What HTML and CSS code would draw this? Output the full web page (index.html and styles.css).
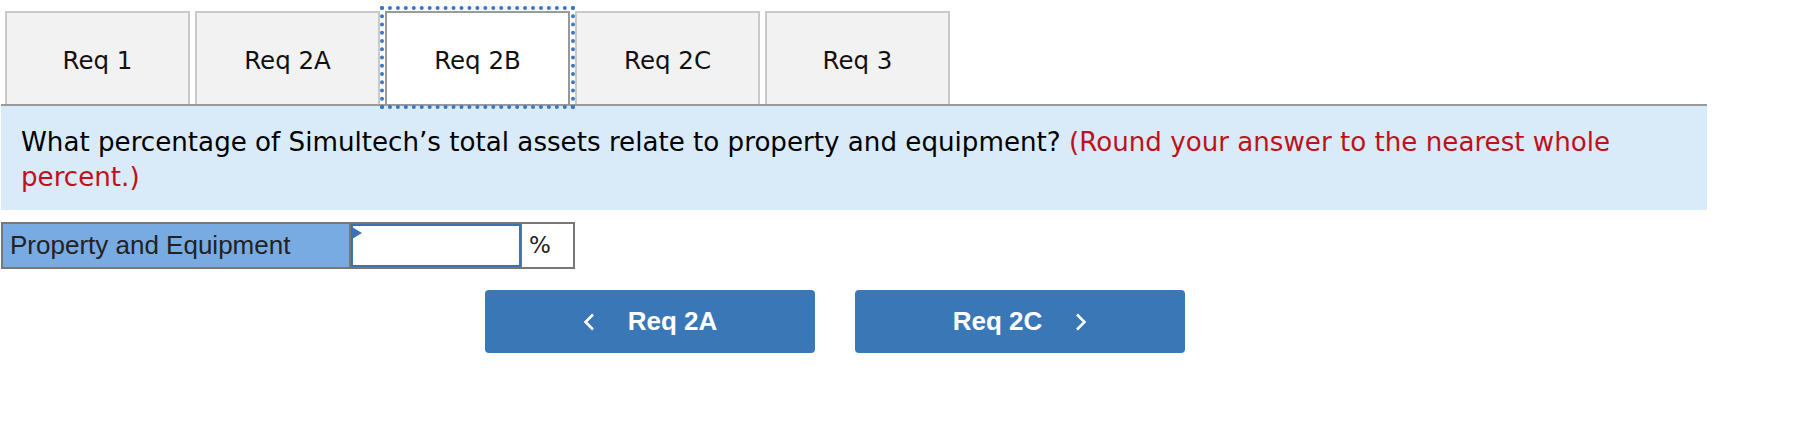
FILE: index.html
```html
<!DOCTYPE html>
<html lang="en">

<head>
    <meta charset="UTF-8">
    <title>Req 2B</title>
    <link rel="stylesheet" href="styles.css">
</head>

<body>
    <div class="tabs">
        <div class="tab">Req 1</div>
        <div class="tab">Req 2A</div>
        <div class="tab active">Req 2B</div>
        <div class="tab">Req 2C</div>
        <div class="tab">Req 3</div>
    </div>

    <div class="question">
        What percentage of Simultech’s total assets relate to property and equipment?
        <span class="hint">(Round your answer to the nearest whole percent.)</span>
    </div>

    <div class="answer-row">
        <div class="answer-label">Property and Equipment</div>
        <div class="answer-input"><span class="marker"></span></div>
        <div class="answer-unit">%</div>
    </div>

    <div class="nav">
        <button class="nav-button">
            <svg width="12" height="18" viewBox="0 0 12 18"><polyline points="10,1.5 2.5,9 10,16.5" /></svg>
            <span>Req 2A</span>
        </button>
        <button class="nav-button">
            <span>Req 2C</span>
            <svg width="12" height="18" viewBox="0 0 12 18"><polyline points="2,1.5 9.5,9 2,16.5" /></svg>
        </button>
    </div>
</body>

</html>
```

FILE: styles.css
```css
body {
    margin: 0;
    font-family: "DejaVu Sans", Verdana, sans-serif;
    color: #111;
    background-color: #fff;
}

.tabs {
    display: flex;
    gap: 5px;
    padding: 11px 0 0 5px;
}

.tab {
    box-sizing: border-box;
    width: 185px;
    height: 93px;
    display: flex;
    align-items: center;
    justify-content: center;
    padding-top: 3px;
    font-size: 24.5px;
    background-color: #f2f2f2;
    border: 2px solid #c9c9c9;
    border-bottom: none;
}

.tab.active {
    position: relative;
    z-index: 1;
    background-color: #fff;
    border-color: #999;
    outline: 4px dotted #3b78c0;
    outline-offset: 1px;
}

.question {
    width: 1706px;
    box-sizing: border-box;
    margin-left: 1px;
    padding: 19px 20px 16px;
    border-top: 2px solid #999;
    background-color: #d9ebf8;
    font-size: 26.15px;
    line-height: 34.5px;
    color: #000;
}

.hint {
    color: #c0111a;
}

.answer-row {
    display: inline-flex;
    box-sizing: border-box;
    height: 47px;
    margin: 12px 0 0 1px;
    border: 2px solid #777;
}

.answer-label {
    width: 348px;
    padding-left: 7px;
    box-sizing: border-box;
    border-right: 2px solid #777;
    background-color: #78abe2;
    font-family: "Liberation Sans", Arial, sans-serif;
    font-size: 26px;
    line-height: 43px;
    color: #222;
}

.answer-input {
    position: relative;
    width: 170px;
    box-sizing: border-box;
    border: 2px solid #3a72b5;
    background-color: #fff;
}

.marker {
    position: absolute;
    left: -1px;
    top: 1px;
    border-left: 10px solid #3a72b5;
    border-top: 6px solid transparent;
    border-bottom: 6px solid transparent;
}

.answer-unit {
    width: 52px;
    box-sizing: border-box;
    padding-left: 7px;
    border-left: 1px solid #777;
    font-size: 23px;
    line-height: 43px;
    color: #222;
}

.nav {
    display: flex;
    justify-content: center;
    gap: 40px;
    width: 1670px;
    margin-top: 21px;
}

.nav-button {
    width: 330px;
    height: 63px;
    display: flex;
    align-items: center;
    justify-content: center;
    gap: 33px;
    border: none;
    border-radius: 4px;
    background-color: #3a77b7;
    color: #fff;
    font-family: "Liberation Sans", Arial, sans-serif;
    font-weight: bold;
    font-size: 26px;
}

.nav-button svg {
    fill: none;
    stroke: #fff;
    stroke-width: 2.5;
}
```
